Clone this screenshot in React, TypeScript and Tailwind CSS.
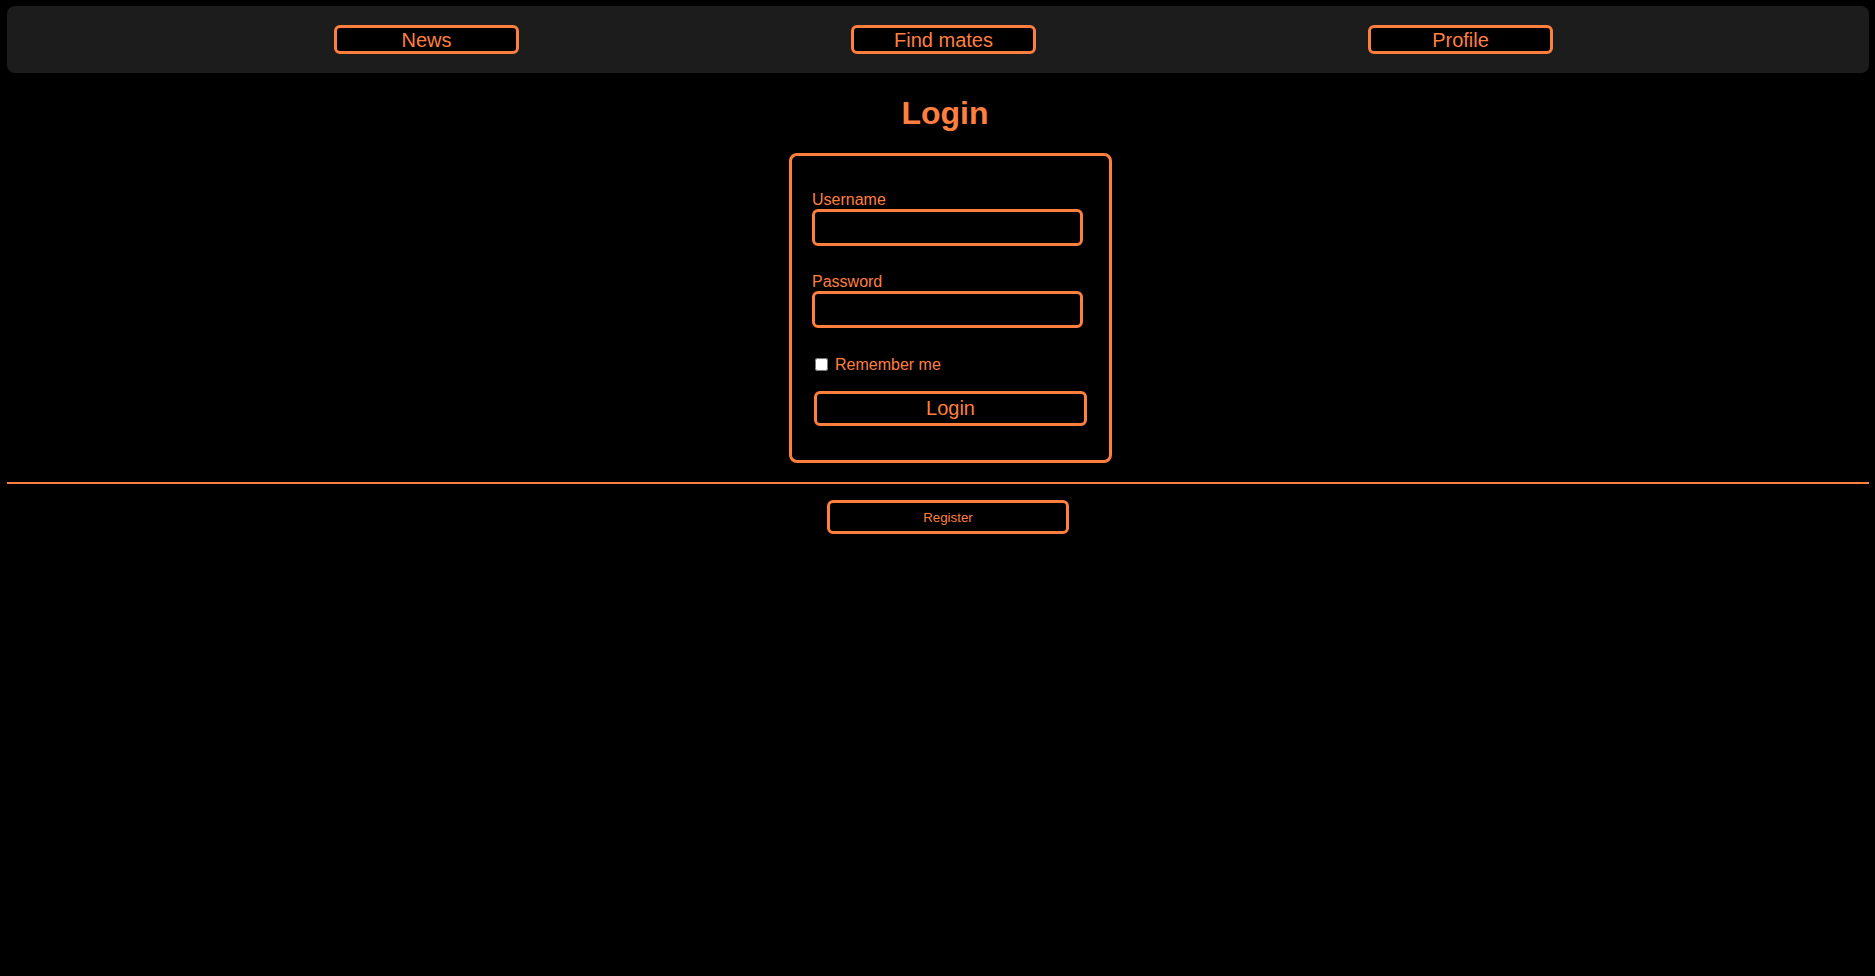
import React from "react";

const navItems = ["News", "Find mates", "Profile"];

export default function App() {
  return (
    <div
      className="min-h-screen bg-black pl-[7px] pr-[6px] pt-[6px] text-[#ff7f3f]"
      style={{ fontFamily: '"Liberation Sans", Arial, sans-serif' }}
    >
      <nav className="flex h-[67px] items-center gap-[332px] rounded-lg bg-[#1c1c1c] pl-[327px]">
        {navItems.map((item) => (
          <button
            key={item}
            className="flex h-[29px] w-[185px] items-center justify-center rounded-md border-[3px] border-[#ff7f3f] bg-black pt-[1px] text-[20px] leading-[23px] text-[#ff7f3f]"
          >
            {item}
          </button>
        ))}
      </nav>

      <h1 className="mb-[21px] mt-[22px] pl-[14px] text-center text-[32px] font-bold leading-[37px]">
        Login
      </h1>

      <form
        className="ml-[782px] flex h-[310px] w-[323px] flex-col rounded-lg border-[3px] border-[#ff7f3f] pl-[20px] pt-[34px]"
        onSubmit={(e) => e.preventDefault()}
      >
        <label className="block text-[16px] leading-[19px]">Username</label>
        <input
          type="text"
          className="h-[37px] w-[271px] rounded-md border-[3px] border-[#ff7f3f] bg-black px-2 text-[#ff7f3f] outline-none"
        />
        <label className="mt-[26px] block text-[16px] leading-[19px]">Password</label>
        <input
          type="password"
          className="h-[37px] w-[271px] rounded-md border-[3px] border-[#ff7f3f] bg-black px-2 text-[#ff7f3f] outline-none"
        />
        <div className="mt-[27px] flex h-[19px] items-center">
          <input type="checkbox" className="m-0 ml-[3px] h-[13px] w-[13px]" />
          <span className="ml-[7px] text-[16px] leading-[19px]">Remember me</span>
        </div>
        <button
          type="submit"
          className="ml-[2px] mt-[17px] flex h-[35px] w-[273px] items-center justify-center rounded-md border-[3px] border-[#ff7f3f] bg-black text-[20px] leading-[23px] text-[#ff7f3f]"
        >
          Login
        </button>
      </form>

      <div className="mt-[19px] h-0 border-t-2 border-[#ff7f3f]" />

      <div className="mt-[16px] pl-[820px]">
        <button className="flex h-[34px] w-[242px] items-center justify-center rounded-md border-[3px] border-[#ff7f3f] bg-black pt-[2px] text-[13.33px] text-[#ff7f3f]">
          Register
        </button>
      </div>
    </div>
  );
}
